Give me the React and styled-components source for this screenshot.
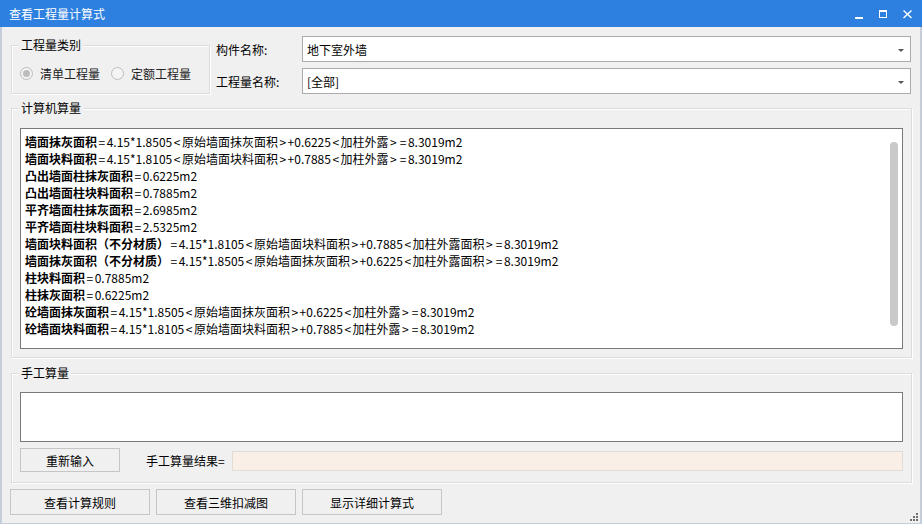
import styled, { createGlobalStyle } from "styled-components";

const GlobalStyle = createGlobalStyle`
  html, body {
    margin: 0;
    padding: 0;
    background: #F0F0F0;
  }
  * {
    box-sizing: border-box;
  }
`;

const lines = [
  { label: "墙面抹灰面积", value: "=4.15*1.8505<原始墙面抹灰面积>+0.6225<加柱外露>=8.3019m2" },
  { label: "墙面块料面积", value: "=4.15*1.8105<原始墙面块料面积>+0.7885<加柱外露>=8.3019m2" },
  { label: "凸出墙面柱抹灰面积", value: "=0.6225m2" },
  { label: "凸出墙面柱块料面积", value: "=0.7885m2" },
  { label: "平齐墙面柱抹灰面积", value: "=2.6985m2" },
  { label: "平齐墙面柱块料面积", value: "=2.5325m2" },
  { label: "墙面块料面积（不分材质）", value: "=4.15*1.8105<原始墙面块料面积>+0.7885<加柱外露面积>=8.3019m2" },
  { label: "墙面抹灰面积（不分材质）", value: "=4.15*1.8505<原始墙面抹灰面积>+0.6225<加柱外露面积>=8.3019m2" },
  { label: "柱块料面积", value: "=0.7885m2" },
  { label: "柱抹灰面积", value: "=0.6225m2" },
  { label: "砼墙面抹灰面积", value: "=4.15*1.8505<原始墙面抹灰面积>+0.6225<加柱外露>=8.3019m2" },
  { label: "砼墙面块料面积", value: "=4.15*1.8105<原始墙面块料面积>+0.7885<加柱外露>=8.3019m2" },
];

// the dialog font draws < > = wider than ours, so give them a little room
function Formula({ text }) {
  const parts = text.split(/([<>=])/).filter(Boolean);
  return parts.map((p, i) => (/^[<>=]$/.test(p) ? <Sym key={i}>{p}</Sym> : p));
}

export default function App() {
  return (
    <>
      <GlobalStyle />
      <Window>
        <TitleBar>
          <Title>查看工程量计算式</Title>
          <Controls>
            <svg width="12" height="12" viewBox="0 0 12 12">
              <rect x="1" y="9" width="8" height="2" fill="#fff" />
            </svg>
            <svg width="12" height="12" viewBox="0 0 12 12">
              <rect x="1.5" y="2.5" width="7" height="7" fill="none" stroke="#fff" />
              <rect x="1" y="2" width="8" height="2" fill="#fff" />
            </svg>
            <svg width="12" height="12" viewBox="0 0 12 12">
              <path d="M1.5 2.5 L9.5 10 M9.5 2.5 L1.5 10" stroke="#fff" strokeWidth="1.4" />
            </svg>
          </Controls>
        </TitleBar>
        <Body>
          <TopRow>
            <GroupBox $width="199px" $height="49px" $padding="0 0 0 8px">
              <Legend>工程量类别</Legend>
              <RadioRow>
                <RadioItem>
                  <Radio $checked />
                  <span>清单工程量</span>
                </RadioItem>
                <RadioItem>
                  <Radio />
                  <span>定额工程量</span>
                </RadioItem>
              </RadioRow>
            </GroupBox>
            <Fields>
              <FieldRow>
                <FieldLabel>构件名称:</FieldLabel>
                <Combo>
                  <span>地下室外墙</span>
                  <Arrow />
                </Combo>
              </FieldRow>
              <FieldRow>
                <FieldLabel>工程量名称:</FieldLabel>
                <Combo>
                  <span>[全部]</span>
                  <Arrow />
                </Combo>
              </FieldRow>
            </Fields>
          </TopRow>

          <GroupBox $height="250px" $padding="19px 8px 0 8px" $top="14px">
            <Legend>计算机算量</Legend>
            <TextArea $height="221px">
              {lines.map((l, i) => (
                <Line key={i}>
                  <b>{l.label}</b>
                  <Formula text={l.value} />
                </Line>
              ))}
              <ScrollThumb />
            </TextArea>
          </GroupBox>

          <GroupBox $height="110px" $padding="18px 8px 0 8px" $top="15px">
            <Legend>手工算量</Legend>
            <TextArea $height="50px" />
            <ResultRow>
              <Button $width="100px" $height="24px">重新输入</Button>
              <ResultLabel>手工算量结果=</ResultLabel>
              <ResultBox />
            </ResultRow>
          </GroupBox>

          <ButtonRow>
            <Button $width="140px" $height="26px">查看计算规则</Button>
            <Button $width="140px" $height="26px">查看三维扣减图</Button>
            <Button $width="140px" $height="26px">显示详细计算式</Button>
          </ButtonRow>
          <Grip>
            <svg width="8" height="8" viewBox="0 0 8 8">
              <rect x="6" y="0" width="2" height="2" fill="#707070" />
              <rect x="3" y="3" width="2" height="2" fill="#707070" />
              <rect x="6" y="3" width="2" height="2" fill="#707070" />
              <rect x="0" y="6" width="2" height="2" fill="#707070" />
              <rect x="3" y="6" width="2" height="2" fill="#707070" />
              <rect x="6" y="6" width="2" height="2" fill="#707070" />
            </svg>
          </Grip>
        </Body>
      </Window>
    </>
  );
}

const Window = styled.div`
  width: 922px;
  height: 524px;
  display: flex;
  flex-direction: column;
  background: #F0F0F0;
  font-family: "Noto Sans CJK SC", "Microsoft YaHei", sans-serif;
  font-size: 12px;
  color: #000;
  overflow: hidden;
`;

const TitleBar = styled.div`
  height: 27px;
  flex-shrink: 0;
  background: #2E80E0;
  display: flex;
  align-items: center;
  justify-content: space-between;
  padding: 0 8px 0 9px;
`;

const Title = styled.div`
  color: #fff;
  font-size: 12px;
`;

const Controls = styled.div`
  display: flex;
  gap: 12px;
  padding-top: 1px;

  svg {
    display: block;
  }
`;

const Body = styled.div`
  flex: 1;
  position: relative;
  border-left: 2px solid #C5CCDA;
  border-right: 2px solid #C5CCDA;
  border-bottom: 1px solid #C5CCDA;
  padding: 9px 8px 0 9px;
  display: flex;
  flex-direction: column;
`;

const TopRow = styled.div`
  display: flex;
  align-items: flex-start;
`;

const GroupBox = styled.div`
  position: relative;
  flex-shrink: 0;
  width: ${(p) => p.$width || "auto"};
  height: ${(p) => p.$height};
  margin-top: ${(p) => p.$top || "9px"};
  padding: ${(p) => p.$padding};
  border: 1px solid #DCDCDC;
  box-shadow: inset 1px 1px 0 #FFFFFF, 1px 1px 0 #FFFFFF;
`;

const Legend = styled.span`
  position: absolute;
  top: -9px;
  left: 7px;
  padding: 0 2px;
  background: #F0F0F0;
  line-height: 16px;
`;

const RadioRow = styled.div`
  display: flex;
  align-items: center;
  height: 100%;
  padding-top: 8px;
  gap: 11px;
`;

const RadioItem = styled.label`
  display: flex;
  align-items: center;
  gap: 7px;
  color: #222;
`;

const Radio = styled.span`
  width: 13px;
  height: 13px;
  border-radius: 50%;
  border: 1px solid #BCBCBC;
  background: #F4F4F4;
  display: flex;
  align-items: center;
  justify-content: center;

  &::after {
    content: "";
    width: 7px;
    height: 7px;
    border-radius: 50%;
    background: ${(p) => (p.$checked ? "#BDBDBD" : "transparent")};
  }
`;

const Fields = styled.div`
  display: flex;
  flex-direction: column;
  gap: 6px;
  margin-left: 6px;
`;

const FieldRow = styled.div`
  display: flex;
  align-items: center;
`;

const FieldLabel = styled.div`
  width: 86px;
`;

const Combo = styled.div`
  width: 609px;
  height: 26px;
  background: #fff;
  border: 1px solid #ABABAB;
  display: flex;
  align-items: center;
  justify-content: space-between;
  padding: 0 6px 0 4px;
`;

const Arrow = styled.span`
  width: 0;
  height: 0;
  border-left: 3px solid transparent;
  border-right: 3px solid transparent;
  border-top: 3px solid #555;
  margin-top: 2px;
`;

const TextArea = styled.div`
  position: relative;
  height: ${(p) => p.$height};
  background: #fff;
  border: 1px solid #7A7A7A;
  padding: 4px 4px;
  overflow: hidden;
`;

const Line = styled.div`
  line-height: 17px;
  white-space: nowrap;

  b {
    font-weight: 700;
  }
`;

const Sym = styled.span`
  padding: 0 1.5px;
`;

const ScrollThumb = styled.div`
  position: absolute;
  right: 4px;
  top: 13px;
  width: 8px;
  height: 184px;
  border-radius: 4px;
  background: #C9C9C9;
`;

const ResultRow = styled.div`
  display: flex;
  align-items: center;
  margin-top: 6px;
`;

const Button = styled.div`
  width: ${(p) => p.$width};
  height: ${(p) => p.$height};
  flex-shrink: 0;
  background: #F0F0F0;
  border: 1px solid #C6C6C6;
  display: flex;
  align-items: center;
  justify-content: center;
  color: #000;
`;

const ResultLabel = styled.div`
  margin-left: 26px;
  width: 86px;
`;

const ResultBox = styled.div`
  flex: 1;
  height: 20px;
  margin-top: 2px;
  background: #F9EFE6;
  border: 1px solid #E0DCD8;
`;

const ButtonRow = styled.div`
  display: flex;
  gap: 6px;
  margin-top: 6px;
  margin-left: -1px;
`;

const Grip = styled.div`
  position: absolute;
  right: 2px;
  bottom: 2px;

  svg {
    display: block;
  }
`;
